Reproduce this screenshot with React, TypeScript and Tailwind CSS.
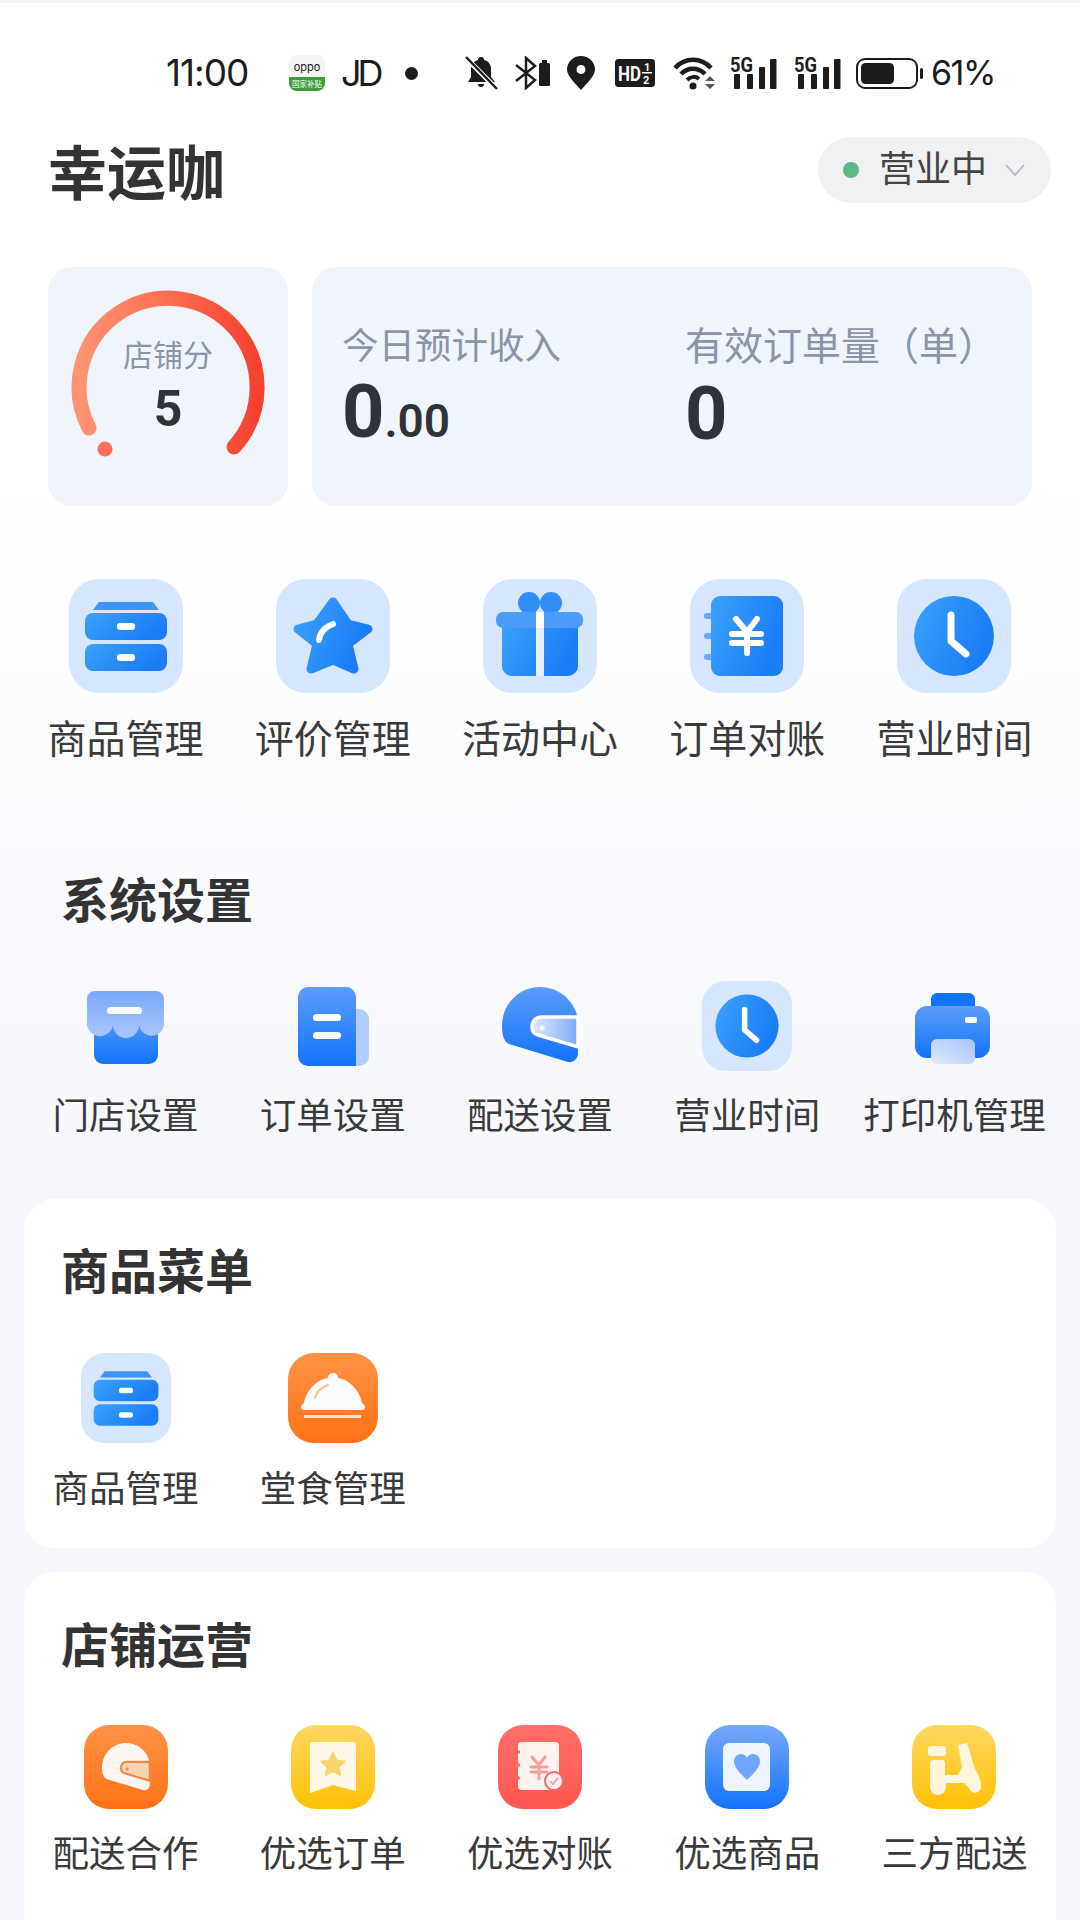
import type { ReactNode } from 'react';

const blue = 'url(#blueV)';
const blueH = 'url(#blueH)';

function GradientDefs() {
  return (
    <svg className="absolute w-0 h-0" aria-hidden="true">
      <defs>
        <linearGradient id="blueV" x1="0" y1="0" x2="0" y2="1">
          <stop offset="0%" stopColor="#5b9dfa" />
          <stop offset="100%" stopColor="#1273fb" />
        </linearGradient>
        <linearGradient id="blueH" x1="0" y1="0" x2="1" y2="0.4">
          <stop offset="0%" stopColor="#3aa2fb" />
          <stop offset="100%" stopColor="#1a7cf6" />
        </linearGradient>
        <linearGradient id="awning" x1="0" y1="0" x2="0" y2="1">
          <stop offset="0%" stopColor="#79a8fb" />
          <stop offset="100%" stopColor="#a9c7fb" />
        </linearGradient>
        <linearGradient id="visor" x1="0" y1="0" x2="1" y2="0">
          <stop offset="0%" stopColor="#dfe9fc" />
          <stop offset="100%" stopColor="#7ea9f6" />
        </linearGradient>
        <linearGradient id="paper" x1="0" y1="1" x2="1" y2="0">
          <stop offset="0%" stopColor="#dfe9fc" />
          <stop offset="100%" stopColor="#a5c4fa" />
        </linearGradient>
        <linearGradient id="orange" x1="0" y1="0" x2="0" y2="1">
          <stop offset="0%" stopColor="#ff9346" />
          <stop offset="100%" stopColor="#ff7216" />
        </linearGradient>
        <linearGradient id="yellow" x1="0" y1="0" x2="0" y2="1">
          <stop offset="0%" stopColor="#ffd761" />
          <stop offset="100%" stopColor="#ffc106" />
        </linearGradient>
        <linearGradient id="red" x1="0" y1="0" x2="0" y2="1">
          <stop offset="0%" stopColor="#ff7069" />
          <stop offset="100%" stopColor="#ff5650" />
        </linearGradient>
        <linearGradient id="tileBlue" x1="0" y1="0" x2="0" y2="1">
          <stop offset="0%" stopColor="#76a8fb" />
          <stop offset="100%" stopColor="#1273fb" />
        </linearGradient>
        <linearGradient id="gauge" x1="0" y1="0" x2="1" y2="0">
          <stop offset="0%" stopColor="#ff9473" />
          <stop offset="50%" stopColor="#ff6d52" />
          <stop offset="100%" stopColor="#f6412f" />
        </linearGradient>
      </defs>
    </svg>
  );
}

function Tile({ size, box, fill, radius, children }: { size: number; box: number; fill?: string; radius?: number; children: ReactNode }) {
  return (
    <svg width={size} height={size} viewBox={`0 0 ${box} ${box}`}>
      {fill && <rect width={box} height={box} rx={radius} fill={fill} />}
      {children}
    </svg>
  );
}

const paleBlue = '#d6e6fc';

const DrawerIcon = ({ size }: { size: number }) => (
  <Tile size={size} box={114} fill={paleBlue} radius={30}>
    <path d="M30 23H84L90 31H24Z" fill="#3d94f8" />
    <rect x="16" y="34" width="82" height="27" rx="8" fill={blueH} />
    <rect x="16" y="65" width="82" height="27" rx="8" fill={blueH} />
    <rect x="48" y="44" width="18" height="7" rx="3" fill="#fff" />
    <rect x="48" y="75" width="18" height="7" rx="3" fill="#fff" />
  </Tile>
);

const StarIcon = () => (
  <Tile size={114} box={114} fill={paleBlue} radius={30}>
    <path
      d="M57 23L72 45 92 50 72 65 78 90 57 81 35 90 41 65 22 50 41 45Z"
      fill={blueH}
      stroke={blueH}
      strokeWidth="9"
      strokeLinejoin="round"
    />
    <path d="M43 61C44 53 49 48 57 45" fill="none" stroke="#fff" strokeWidth="6" strokeLinecap="round" />
  </Tile>
);

const GiftIcon = () => (
  <Tile size={114} box={114} fill={paleBlue} radius={30}>
    <circle cx="46" cy="24" r="11" fill="#2f8ef8" />
    <circle cx="68" cy="24" r="11" fill="#2f8ef8" />
    <path d="M19 46H95V87A10 10 0 0 1 85 97H29A10 10 0 0 1 19 87Z" fill={blueH} />
    <rect x="13" y="33" width="87" height="16" rx="7" fill="#4a9cfa" />
    <rect x="53" y="49" width="8" height="48" fill="#e6f0fd" />
    <rect x="53" y="33" width="8" height="16" fill="#fff" />
  </Tile>
);

const BookIcon = () => (
  <Tile size={114} box={114} fill={paleBlue} radius={30}>
    <rect x="14" y="34" width="12" height="6" rx="3" fill="#68a9f8" />
    <rect x="14" y="54" width="12" height="6" rx="3" fill="#68a9f8" />
    <rect x="14" y="75" width="12" height="6" rx="3" fill="#68a9f8" />
    <rect x="21" y="17" width="72" height="80" rx="9" fill={blueH} />
    <path d="M46 40L57 53 67 40M42 55H71M42 64H71M57 53V74" fill="none" stroke="#fff" strokeWidth="6" strokeLinecap="round" strokeLinejoin="round" />
  </Tile>
);

const ClockIcon = ({ size }: { size: number }) => (
  <Tile size={size} box={114} fill={paleBlue} radius={30}>
    <circle cx="57" cy="57" r="40" fill={blueH} />
    <path d="M54 36V62L69 75" fill="none" stroke="#fff" strokeWidth="7" strokeLinecap="round" strokeLinejoin="round" />
  </Tile>
);

const StoreIcon = () => (
  <Tile size={90} box={90}>
    <rect x="13" y="30" width="64" height="53" rx="9" fill={blue} />
    <path d="M14 10H75A8 8 0 0 1 83 18V40A12.500 12.500 0 0 1 58 44 13 13 0 0 1 32 44 12.500 12.500 0 0 1 6 40V18A8 8 0 0 1 14 10Z" fill="url(#awning)" />
    <rect x="26" y="26" width="35" height="7" rx="3.500" fill="#fff" />
  </Tile>
);

const DocIcon = () => (
  <Tile size={90} box={90}>
    <path d="M60 28H71A10 10 0 0 1 81 38V75A10 10 0 0 1 71 85H60Z" fill="#b0cdfc" />
    <path d="M20 6H58A10 10 0 0 1 68 16V85H20A10 10 0 0 1 10 75V16A10 10 0 0 1 20 6Z" fill={blue} />
    <rect x="25" y="33" width="28" height="7" rx="3.500" fill="#fff" />
    <rect x="25" y="51" width="28" height="7" rx="3.500" fill="#fff" />
  </Tile>
);

function HelmetShape({ shell, visor, rim, dot }: { shell: string; visor: string; rim: string; dot: string }) {
  return (
    <>
      <path d="M82 34C77 17 62 6 45 6 24 6 7 23 7 45 7 52 8 60 14 63L73 81C78 82 83 78 83 72Z" fill={shell} />
      <path d="M83 36H46C40 36 37 41 37 46 37 50 39 53 43 54L83 66Z" fill={visor} stroke={rim} strokeWidth="3.500" />
      <circle cx="47" cy="47" r="2.500" fill={dot} />
    </>
  );
}

const HelmetIcon = () => (
  <Tile size={90} box={90}>
    <HelmetShape shell={blue} visor="url(#visor)" rim="#fff" dot="#fff" />
  </Tile>
);

const PrinterIcon = () => (
  <Tile size={90} box={90}>
    <path d="M22 26V18A6 6 0 0 1 28 12H60A6 6 0 0 1 66 18V26Z" fill="#1273fb" />
    <rect x="6" y="25" width="75" height="52" rx="12" fill={blue} />
    <rect x="56" y="36" width="12" height="6" rx="2" fill="#fff" />
    <path d="M28 58H60A6 6 0 0 1 66 64V77A6 6 0 0 1 60 83H28A6 6 0 0 1 22 77V64A6 6 0 0 1 28 58Z" fill="url(#paper)" />
  </Tile>
);

const ClocheIcon = () => (
  <Tile size={90} box={90} fill="url(#orange)" radius={26}>
    <path
      d="M45 20C48 20 50 22 50 25 63 27 72 39 74 50 76 51 77 53 77 54 77 56 76 57 74 57H16C14 57 13 56 13 54 13 53 14 51 16 50 18 39 27 27 40 25 40 22 42 20 45 20Z"
      fill="#fbfbfb"
    />
    <path d="M27 45C29 38 34 34 40 32" fill="none" stroke="#fbbf94" strokeWidth="2" strokeLinecap="round" />
    <rect x="16" y="62" width="57" height="3" fill="#ffe7d5" />
  </Tile>
);

const OrangeHelmet = () => (
  <Tile size={84} box={84} fill="url(#orange)" radius={25}>
    <g transform="translate(13.6 14.2) scale(0.63)">
      <HelmetShape shell="#fdf6f1" visor="#fbd3b4" rim="#ec8a45" dot="#ec8a45" />
    </g>
  </Tile>
);

const BookmarkIcon = () => (
  <Tile size={84} box={84} fill="url(#yellow)" radius={25}>
    <path d="M22 17H62A3 3 0 0 1 65 20V66L42 60 19 68V20A3 3 0 0 1 22 17Z" fill="#fff8e8" />
    <path d="M42 28L45.500 35.500 53.500 36.500 47.500 42 49 50 42 46 35 50 36.500 42 30.500 36.500 38.500 35.500Z" fill="#f9d56f" stroke="#f9d56f" strokeWidth="2" strokeLinejoin="round" />
  </Tile>
);

const LedgerIcon = () => (
  <Tile size={84} box={84} fill="url(#red)" radius={25}>
    <rect x="20" y="17" width="41" height="48" rx="4" fill="#fff3f0" />
    <circle cx="20" cy="27" r="2" fill="#ff6660" />
    <circle cx="20" cy="40" r="2" fill="#ff6660" />
    <circle cx="20" cy="53" r="2" fill="#ff6660" />
    <path d="M34 32L41 40 47 32M33 42H49M33 47H49M41 40V54" fill="none" stroke="#fb9c9a" strokeWidth="3" strokeLinecap="round" strokeLinejoin="round" />
    <circle cx="56" cy="56" r="9" fill="#fff0ee" stroke="#e9686a" strokeWidth="2" />
    <path d="M52 56L55 59 60 53" fill="none" stroke="#ee9a9a" strokeWidth="1.600" />
  </Tile>
);

const HeartCardIcon = () => (
  <Tile size={84} box={84} fill="url(#tileBlue)" radius={25}>
    <rect x="18" y="18" width="47" height="48" rx="6" fill="#eff5ff" />
    <path d="M42 55C36 49 29 43 29 36 29 32 32 29 36 29 38.500 29 41 30.500 42 33 43 30.500 45.500 29 48 29 52 29 55 32 55 36 55 43 48 49 42 55Z" fill="#6fa6fb" />
  </Tile>
);

const ScooterIcon = () => (
  <Tile size={84} box={84} fill="url(#yellow)" radius={25}>
    <rect x="16" y="21" width="18" height="10" rx="3" fill="#fff6dd" />
    <path d="M18 38A3 3 0 0 1 21 35H30A3 3 0 0 1 33 38V50H46L50 42 46 20 55 18 63 44C67 50 69 56 69 60A6 6 0 0 1 57 63L52 58H34V62A8 8 0 0 1 18 62Z" fill="#fff6dd" strokeLinejoin="round" />
  </Tile>
);

function StatusBar() {
  return (
    <div className="flex items-center h-[46px] mt-[47px] pl-[166px] text-[#1c1c1c]">
      <span className="w-[82px] text-[37px] leading-[46px] font-['Inter',sans-serif] tracking-[-1px] whitespace-nowrap">11:00</span>
      <svg className="ml-[41px]" width="36" height="36" viewBox="0 0 36 36">
        <rect width="36" height="36" rx="8" fill="#f4f4f2" />
        <path d="M0 22H36V28A8 8 0 0 1 28 36H8A8 8 0 0 1 0 28Z" fill="#3d9b3f" />
        <text x="18" y="16" textAnchor="middle" fontSize="11" fontFamily="Inter" fill="#222">oppo</text>
        <text x="18" y="32" textAnchor="middle" fontSize="7.500" fontFamily="Noto Sans CJK SC" fill="#fff">国家补贴</text>
      </svg>
      <span className="ml-[16px] w-[37px] text-[36px] leading-[46px] font-['Inter',sans-serif] tracking-[-4px]">JD</span>
      <span className="ml-[27px] w-[13px] h-[13px] rounded-full bg-[#1c1c1c]" />
      <svg className="ml-[47px]" width="33" height="34" viewBox="0 0 33 34">
        <path d="M16 1C18 1 19 2 19 4 24 5 26 9 26 13V21L30 26H3L6 21V13C6 9 9 5 13 4 13 2 14 1 16 1Z" fill="#1c1c1c" />
        <path d="M13 28H19A3 3 0 0 1 13 28Z" fill="#1c1c1c" />
        <path d="M1 2L32 33" stroke="#fff" strokeWidth="5" />
        <path d="M1 1L32 33" stroke="#1c1c1c" strokeWidth="2.500" />
      </svg>
      <svg className="ml-[17px]" width="36" height="34" viewBox="0 0 36 34">
        <path d="M1 9L20 24 11 32V2L20 10 1 25" fill="none" stroke="#1c1c1c" strokeWidth="2.500" />
        <rect x="24" y="7" width="11" height="23" rx="1.500" fill="#1c1c1c" />
        <rect x="27" y="4" width="5" height="3" fill="#1c1c1c" />
      </svg>
      <svg className="ml-[16px]" width="28" height="34" viewBox="0 0 28 34">
        <path fillRule="evenodd" d="M14 34C8 27 0 20 0 13.500A14 13.500 0 0 1 28 13.500C28 20 20 27 14 34ZM14 9A4.500 4.500 0 1 0 14 18 4.500 4.500 0 0 0 14 9Z" fill="#1c1c1c" />
      </svg>
      <svg className="ml-[20px]" width="40" height="28" viewBox="0 0 40 28">
        <rect width="40" height="28" rx="3.500" fill="#1c1c1c" />
        <text x="3" y="22" fontSize="20" fontWeight="700" fontFamily="Roboto" fill="#fff" textLength="23" lengthAdjust="spacingAndGlyphs">HD</text>
        <text x="29" y="11.500" fontSize="11" fontWeight="700" fontFamily="Roboto" fill="#fff">1</text>
        <rect x="27" y="13" width="10" height="1.500" fill="#fff" />
        <text x="28" y="25" fontSize="11" fontWeight="700" fontFamily="Roboto" fill="#fff">2</text>
      </svg>
      <svg className="ml-[18px]" width="42" height="34" viewBox="0 0 42 34">
        <path d="M2 12C12 1 28 1 38 12" fill="none" stroke="#1c1c1c" strokeWidth="4.500" />
        <path d="M8 18C15 11 25 11 32 18" fill="none" stroke="#1c1c1c" strokeWidth="4.500" />
        <path d="M14 24C18 20 23 20 26 23" fill="none" stroke="#1c1c1c" strokeWidth="4" />
        <circle cx="20" cy="30" r="3.500" fill="#1c1c1c" />
        <path d="M32 25H42L37 20ZM32 28H42L37 33Z" fill="#555" />
      </svg>
      <SignalIcon className="ml-[15px]" />
      <SignalIcon className="ml-[17px]" />
      <svg className="ml-[15px]" width="67" height="31" viewBox="0 0 67 31">
        <rect x="1" y="1" width="60" height="29" rx="8" fill="none" stroke="#1c1c1c" strokeWidth="2" />
        <rect x="5" y="5" width="33" height="21" rx="4.500" fill="#1c1c1c" />
        <rect x="64" y="10" width="3" height="11" rx="1.500" fill="#1c1c1c" />
      </svg>
      <span className="ml-[8px] text-[34px] leading-[46px] font-['Inter',sans-serif] tracking-[-1.500px]">61%</span>
    </div>
  );
}

function SignalIcon({ className }: { className: string }) {
  return (
    <svg className={className} width="47" height="42" viewBox="0 -4 47 42">
      <text x="0" y="16" fontSize="20" fontWeight="700" fontFamily="Roboto" fill="#1c1c1c" textLength="23" lengthAdjust="spacingAndGlyphs">5G</text>
      <rect x="4" y="18" width="6" height="15" rx="1" fill="#1c1c1c" />
      <rect x="17" y="18" width="6" height="15" rx="1" fill="#1c1c1c" />
      <rect x="29" y="11" width="6" height="22" rx="1" fill="#1c1c1c" />
      <rect x="40" y="3" width="6.500" height="30" rx="1" fill="#1c1c1c" />
    </svg>
  );
}

function Header() {
  return (
    <div className="flex items-center justify-between mt-[41px] pl-[48px] pr-[29px] h-[66px]">
      <h1 className="mt-[10px] text-[59px] leading-[66px] font-bold text-[#333333]">幸运咖</h1>
      <div className="flex items-center w-[233px] h-[66px] pl-[25px] rounded-full bg-[#f0f1f2]">
        <span className="w-[16px] h-[16px] rounded-full bg-[#5cb985]" />
        <span className="ml-[20px] text-[36px] leading-[44px] text-[#444444]">营业中</span>
        <svg className="ml-[18px]" width="20" height="12" viewBox="0 0 20 12">
          <path d="M1 1L10 11 19 1" fill="none" stroke="#b4b7bb" strokeWidth="1.800" />
        </svg>
      </div>
    </div>
  );
}

function ScoreCards() {
  return (
    <div className="flex gap-[24px] mt-[64px] px-[48px] h-[239px]">
      <div className="relative w-[240px] rounded-[24px] bg-[#f0f4fd]">
        <svg width="240" height="239" viewBox="0 0 240 239">
          <path d="M41 161A89 89 0 1 1 186 180" fill="none" stroke="url(#gauge)" strokeWidth="15" strokeLinecap="round" />
          <circle cx="57" cy="182" r="7.500" fill="#fb6f5c" />
        </svg>
        <div className="absolute inset-x-0 top-[69px] flex flex-col items-center">
          <span className="h-[40px] text-[30px] leading-[40px] text-[#8a94a6]">店铺分</span>
          <span className="mt-[5px] h-[56px] text-[50px] leading-[56px] font-bold text-[#2f3338]">5</span>
        </div>
      </div>
      <div className="flex flex-1 pt-[58px] pl-[30px] rounded-[24px] bg-[#f0f4fd]">
        <div className="w-[343px]">
          <p className="h-[44px] text-[36.500px] leading-[44px] text-[#8a94a6]">今日预计收入</p>
          <p className="flex items-baseline mt-[6px] h-[74px] leading-[74px] text-[#2f3338] font-bold text-[74px]">
            0<span className="text-[46px] font-semibold">.00</span>
          </p>
        </div>
        <div>
          <p className="flex h-[44px] text-[39px] leading-[44px] text-[#8a94a6] whitespace-nowrap">
            <span>有效订单量</span>
            <span className="w-[39px] text-right">（</span>
            <span>单</span>
            <span className="w-[39px]">）</span>
          </p>
          <p className="mt-[8px] h-[74px] leading-[74px] text-[#2f3338] font-bold text-[74px]">0</p>
        </div>
      </div>
    </div>
  );
}

type Item = { label: string; icon: ReactNode };

const mainItems: Item[] = [
  { label: '商品管理', icon: <DrawerIcon size={114} /> },
  { label: '评价管理', icon: <StarIcon /> },
  { label: '活动中心', icon: <GiftIcon /> },
  { label: '订单对账', icon: <BookIcon /> },
  { label: '营业时间', icon: <ClockIcon size={114} /> },
];

const settingItems: Item[] = [
  { label: '门店设置', icon: <StoreIcon /> },
  { label: '订单设置', icon: <DocIcon /> },
  { label: '配送设置', icon: <HelmetIcon /> },
  { label: '营业时间', icon: <ClockIcon size={90} /> },
  { label: '打印机管理', icon: <PrinterIcon /> },
];

const menuItems: Item[] = [
  { label: '商品管理', icon: <DrawerIcon size={90} /> },
  { label: '堂食管理', icon: <ClocheIcon /> },
];

const opsItems: Item[] = [
  { label: '配送合作', icon: <OrangeHelmet /> },
  { label: '优选订单', icon: <BookmarkIcon /> },
  { label: '优选对账', icon: <LedgerIcon /> },
  { label: '优选商品', icon: <HeartCardIcon /> },
  { label: '三方配送', icon: <ScooterIcon /> },
];

function IconGrid({ items, className, labelClass }: { items: Item[]; className: string; labelClass: string }) {
  return (
    <div className={`grid grid-cols-5 w-[1036px] ${className}`}>
      {items.map(item => (
        <div key={item.label} className="flex flex-col items-center">
          {item.icon}
          <span className={`whitespace-nowrap h-[50px] leading-[50px] text-[#3a3a3a] ${labelClass}`}>{item.label}</span>
        </div>
      ))}
    </div>
  );
}

const sectionTitle = 'h-[60px] text-[48px] leading-[60px] font-bold text-[#333333]';

export default function App() {
  return (
    <div className="w-[1080px] h-[1920px] overflow-hidden border-t-[3px] border-[#f3f3f3] bg-[linear-gradient(180deg,#ffffff_26%,#f5f7fc_62%)] font-['Roboto','Noto_Sans_CJK_SC',sans-serif]">
      <GradientDefs />
      <StatusBar />
      <Header />
      <ScoreCards />

      <IconGrid items={mainItems} className="mt-[73px] ml-[22px]" labelClass="mt-[22px] text-[39px]" />

      <h2 className={`mt-[107px] pl-[61px] ${sectionTitle}`}>系统设置</h2>
      <IconGrid items={settingItems} className="mt-[49px] ml-[22px]" labelClass="mt-[21px] text-[36.500px]" />

      <section className="mt-[57px] mx-[24px] pt-[44px] pb-[33px] rounded-[30px] bg-white">
        <h2 className={`pl-[37px] ${sectionTitle}`}>商品菜单</h2>
        <IconGrid items={menuItems} className="mt-[50px] -ml-[2px]" labelClass="mt-[22px] text-[36.500px]" />
      </section>

      <section className="mt-[24px] mx-[24px] pt-[45px] pb-[40px] rounded-t-[30px] bg-white">
        <h2 className={`pl-[37px] ${sectionTitle}`}>店铺运营</h2>
        <IconGrid items={opsItems} className="mt-[48px] -ml-[2px]" labelClass="mt-[21px] text-[36.500px]" />
      </section>
    </div>
  );
}
